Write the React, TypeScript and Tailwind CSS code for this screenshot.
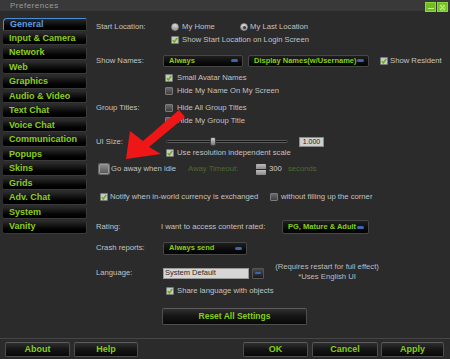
import type { ReactNode } from 'react';

const tabs = [
  'General',
  'Input & Camera',
  'Network',
  'Web',
  'Graphics',
  'Audio & Video',
  'Text Chat',
  'Voice Chat',
  'Communication',
  'Popups',
  'Skins',
  'Grids',
  'Adv. Chat',
  'System',
  'Vanity',
];

function Check({ checked = false, big = false }: { checked?: boolean; big?: boolean }) {
  const size = big ? 'w-[10px] h-[10px]' : 'w-[8px] h-[8px]';
  return (
    <span
      className={`relative shrink-0 ${size} rounded-[1px] border ${
        big ? 'border-[#9a9a9a] bg-gradient-to-b from-[#8a8a8a] to-[#5a5a5a] ring-1 ring-[#6a6a6a]' : 'border-[#7a7a7a]'
      } ${checked ? 'bg-[#c9c9c9]' : big ? '' : 'bg-gradient-to-b from-[#6a6a6a] to-[#3e3e3e]'}`}
    >
      {checked && (
        <svg viewBox="0 0 8 8" className="absolute inset-0 w-full h-full">
          <path d="M1 4.2 L3.2 6.5 L7 1.2" fill="none" stroke="#5fb012" strokeWidth="2" />
        </svg>
      )}
    </span>
  );
}

function Radio({ selected = false }: { selected?: boolean }) {
  return (
    <span className="relative shrink-0 w-[8px] h-[8px] rounded-full border border-[#8a8a8a] bg-gradient-to-b from-[#e0e0e0] to-[#9a9a9a] flex items-center justify-center">
      {selected && <span className="w-[3px] h-[3px] rounded-full bg-[#3a3a3a]" />}
    </span>
  );
}

function Dropdown({ text, className }: { text: string; className: string }) {
  return (
    <div
      className={`flex items-center justify-between rounded-[2px] border border-[#474747] bg-gradient-to-b from-[#1f1f1f] to-[#030303] pl-[5px] pr-[4px] ${className}`}
    >
      <span className="text-[7.5px] font-bold text-[#86cf16] whitespace-nowrap leading-none">{text}</span>
      <span className="w-[7px] h-[3px] rounded-full bg-[#3a68b0]" />
    </div>
  );
}

function Btn({ children, className }: { children: ReactNode; className: string }) {
  return (
    <div
      className={`flex items-center justify-center rounded-[2px] border border-[#4e4e4e] border-t-[#5c5c5c] bg-gradient-to-b from-[#2f2f2f] via-[#151515] to-[#080808] font-bold text-[#86cf16] leading-none ${className}`}
    >
      {children}
    </div>
  );
}

function Row({ children, className }: { children: ReactNode; className: string }) {
  return <div className={`flex items-center ${className}`}>{children}</div>;
}

function Label({ text, w }: { text?: string; w: string }) {
  return <span className={`shrink-0 ${w} whitespace-nowrap`}>{text}</span>;
}

export default function App() {
  return (
    <div
      className="relative w-[450px] h-[359px] overflow-hidden bg-[#2b2b2b] flex flex-col text-[#c2c2c2] text-[7.7px] leading-none"
      style={{ fontFamily: '"Liberation Sans", Arial, sans-serif' }}
    >
      {/* title bar */}
      <div className="h-[11px] shrink-0 bg-[#393939] flex items-center pl-[10px] pr-[2px]">
        <span className="text-[8px] tracking-[0.5px] text-[#9c9c9c]">Preferences</span>
        <div className="ml-auto flex gap-[1px] mt-[3px]">
          <span className="w-[11px] h-[10px] bg-[#6dbf1c] border border-[#8ed63e] flex items-end justify-center pb-[2px]">
            <span className="w-[6px] h-[1px] bg-[#c8f08a]" />
          </span>
          <span className="w-[11px] h-[10px] bg-[#6dbf1c] border border-[#8ed63e] flex items-center justify-center">
            <svg viewBox="0 0 8 8" className="w-[7px] h-[7px]">
              <path d="M1 1 L7 7 M7 1 L1 7" stroke="#c8f08a" strokeWidth="1.2" />
              <circle cx="4" cy="4" r="3.2" fill="none" stroke="#c8f08a" strokeWidth="0.7" />
            </svg>
          </span>
        </div>
      </div>

      {/* main area */}
      <div className="flex h-[327px] shrink-0">
        <div className="w-[88px] shrink-0 pl-[3px] pt-[7px] flex flex-col gap-[2px]">
          {tabs.map((t, i) => (
            <div
              key={t}
              className={`h-[12.5px] w-[84px] flex items-center pl-[6px] rounded-[2px] bg-gradient-to-b from-[#2a2a2a] via-[#0d0d0d] to-[#000000] border-r border-b border-[#3a3a3a] text-[9px] font-bold ${
                i === 0 ? 'text-[#5a9de0] border-l border-t border-l-[#4a8ed4] border-t-[#4a8ed4] rounded-tl-[4px]' : 'text-[#8ccc1e]'
              }`}
            >
              {t}
            </div>
          ))}
        </div>

        <div className="flex-1 pl-[8px] flex flex-col">
          <Row className="mt-[10px] h-[12px]">
            <Label text="Start Location:" w="w-[75px]" />
            <span className="flex items-center gap-[3px] w-[69px]">
              <Radio />
              <span>My Home</span>
            </span>
            <span className="flex items-center gap-[2px]">
              <Radio selected />
              <span>My Last Location</span>
            </span>
          </Row>
          <Row className="mt-[1px] h-[12px]">
            <Label w="w-[75px]" />
            <span className="flex items-center gap-[3px]">
              <Check checked />
              <span>Show Start Location on Login Screen</span>
            </span>
          </Row>

          <Row className="mt-[8px] h-[13px]">
            <Label text="Show Names:" w="w-[67px]" />
            <Dropdown text="Always" className="w-[80px] h-[12px]" />
            <Dropdown text="Display Names(w/Username)" className="ml-[5px] w-[121px] h-[12px]" />
            <span className="ml-[11px] flex items-center gap-[2px]">
              <Check checked />
              <span>Show Resident</span>
            </span>
          </Row>

          <Row className="mt-[5px] h-[12px]">
            <Label w="w-[69px]" />
            <span className="flex items-center gap-[4px]">
              <Check checked />
              <span>Small Avatar Names</span>
            </span>
          </Row>
          <Row className="mt-[1px] h-[12px]">
            <Label w="w-[69px]" />
            <span className="flex items-center gap-[4px]">
              <Check />
              <span>Hide My Name On My Screen</span>
            </span>
          </Row>

          <Row className="mt-[5px] h-[12px]">
            <Label text="Group Titles:" w="w-[69px]" />
            <span className="flex items-center gap-[4px]">
              <Check />
              <span>Hide All Group Titles</span>
            </span>
          </Row>
          <Row className="mt-[1px] h-[12px]">
            <Label w="w-[69px]" />
            <span className="flex items-center gap-[4px]">
              <Check />
              <span>Hide My Group Title</span>
            </span>
          </Row>

          <Row className="mt-[9px] h-[11px]">
            <Label text="UI Size:" w="w-[70px]" />
            <div className="relative w-[122px] h-[9px] flex items-center">
              <div className="w-full h-[3px] rounded-full bg-[#111] border border-[#5a5a5a]" />
              <div className="absolute left-[44px] top-0 w-[6px] h-[9px] rounded-[2px] bg-gradient-to-b from-[#cfcfcf] to-[#7a7a7a] border border-[#444]" />
            </div>
            <span className="ml-[11px] w-[25px] h-[10px] bg-[#cfcfcf] border border-[#8a8a8a] text-[#222] text-[7px] flex items-center justify-center">
              1.000
            </span>
          </Row>
          <Row className="h-[11px]">
            <Label w="w-[70px]" />
            <span className="flex items-center gap-[3px]">
              <Check checked />
              <span>Use resolution independent scale</span>
            </span>
          </Row>

          <Row className="mt-[5px] h-[12px]">
            <span className="w-[92px] shrink-0 flex items-center gap-[2px] pl-[3px]">
              <Check big />
              <span>Go away when idle</span>
            </span>
            <span className="w-[68px] shrink-0 text-[#4f6a2c]">Away Timeout:</span>
            <span className="w-[10px] h-[11px] flex flex-col gap-[1px]">
              <span className="flex-1 bg-gradient-to-b from-[#bdbdbd] to-[#8a8a8a] rounded-t-[1px]" />
              <span className="flex-1 bg-gradient-to-b from-[#bdbdbd] to-[#8a8a8a] rounded-b-[1px]" />
            </span>
            <span className="ml-[3px] w-[19px] shrink-0 text-[#d0d0d0]">300</span>
            <span className="text-[#4f6a2c]">seconds</span>
          </Row>

          <Row className="mt-[16px] h-[12px]">
            <span className="w-[174px] shrink-0 flex items-center gap-[2px] pl-[4px]">
              <Check checked />
              <span className="whitespace-nowrap">Notify when in-world currency is exchanged</span>
            </span>
            <span className="flex items-center gap-[3px]">
              <Check />
              <span>without filling up the corner</span>
            </span>
          </Row>

          <Row className="mt-[17px] h-[14px]">
            <Label text="Rating:" w="w-[65px]" />
            <span className="w-[121px] shrink-0 whitespace-nowrap">I want to access content rated:</span>
            <Dropdown text="PG, Mature & Adult" className="w-[87px] h-[14px]" />
          </Row>

          <Row className="mt-[7px] h-[14px]">
            <Label text="Crash reports:" w="w-[67px]" />
            <Dropdown text="Always send" className="w-[84px] h-[13px]" />
          </Row>

          <Row className="mt-[11px] h-[14px]">
            <Label text="Language:" w="w-[67px]" />
            <span className="w-[86px] h-[11px] shrink-0 bg-[#d6d6d6] border border-[#9a9a9a] text-[#2a2a2a] text-[7.5px] pl-[1px] flex items-center">
              System Default
            </span>
            <span className="ml-[3px] w-[12px] h-[11px] shrink-0 rounded-[1px] bg-gradient-to-b from-[#4a4a4a] to-[#1a1a1a] border border-[#555] flex items-center justify-center">
              <span className="w-[6px] h-[2px] rounded-full bg-[#3a68b0]" />
            </span>
            <span className="ml-[8px] w-[110px] shrink-0 flex flex-col items-center gap-[2.5px] -mt-[3px] text-[#bdbdbd]">
              <span className="whitespace-nowrap">(Requires restart for full effect)</span>
              <span className="whitespace-nowrap">*Uses English UI</span>
            </span>
          </Row>
          <Row className="mt-[5px] h-[12px]">
            <Label w="w-[70px]" />
            <span className="flex items-center gap-[3px]">
              <Check checked />
              <span>Share language with objects</span>
            </span>
          </Row>

          <Row className="mt-[11px] h-[17px]">
            <Label w="w-[66px]" />
            <Btn className="w-[145px] h-[17px] text-[8.5px]">Reset All Settings</Btn>
          </Row>
        </div>
      </div>

      {/* footer */}
      <div className="h-[21px] shrink-0 border-t border-[#464646] flex items-start pt-[3px] pl-[5px] pr-[6px]">
        <Btn className="w-[65px] h-[15px] text-[9px]">About</Btn>
        <Btn className="ml-[4px] w-[64px] h-[15px] text-[9px]">Help</Btn>
        <Btn className="ml-auto w-[65px] h-[15px] text-[9px]">OK</Btn>
        <Btn className="ml-[4px] w-[66px] h-[15px] text-[9px]">Cancel</Btn>
        <Btn className="ml-[3px] w-[63px] h-[15px] text-[9px]">Apply</Btn>
      </div>

      {/* red arrow annotation */}
      <svg className="absolute inset-0 pointer-events-none" width="450" height="359" viewBox="0 0 450 359">
        <polygon
          points="126,159 130,131 143,141 179,110 185,117 149,147 161,154"
          fill="#ee1616"
        />
      </svg>
    </div>
  );
}
